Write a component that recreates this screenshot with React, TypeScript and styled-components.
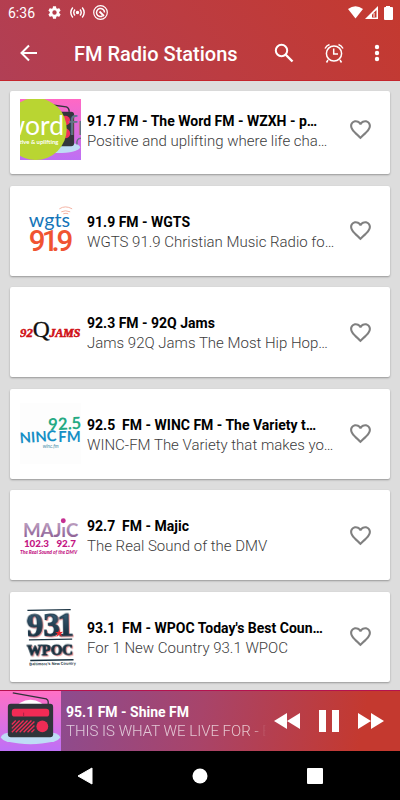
import React from "react";
import styled, { createGlobalStyle } from "styled-components";

const GlobalStyle = createGlobalStyle`
  *, *::before, *::after { box-sizing: border-box; }
  body { margin: 0; font-family: Roboto, "Liberation Sans", sans-serif; background: #ddd; }
  button { border: 0; padding: 0; background: none; color: inherit; font: inherit; cursor: pointer; }
  svg { display: block; }
`;

const Screen = styled.div`
  display: flex;
  flex-direction: column;
  height: 100vh;
  overflow: hidden;
  background: #dddddd;
`;

const Header = styled.header`
  color: #fff;
  background: linear-gradient(55deg, #b13f55 0%, #bc3c41 50%, #c4392f 100%);
  border-bottom: 1px solid #c4262e;
`;

const StatusBar = styled.div`
  display: flex;
  align-items: center;
  height: 25px;
  padding: 0 7px 0 8px;
  font-size: 14px;
`;

const StatusIcons = styled.div<{ $end?: boolean }>`
  display: flex;
  align-items: center;
  gap: ${(p) => (p.$end ? "2px" : "8px")};
  margin-left: ${(p) => (p.$end ? "auto" : "12px")};
`;

const AppBar = styled.div`
  display: flex;
  align-items: center;
  height: 55px;
  padding: 0 5px 0 16px;
`;

const Title = styled.h1`
  flex: 1;
  margin: 2px 0 0 32px;
  font-size: 20px;
  line-height: 24px;
  font-weight: 500;
  white-space: nowrap;
`;

const BarButton = styled.button<{ $width: number }>`
  display: flex;
  align-items: center;
  justify-content: center;
  width: ${(p) => p.$width}px;
  height: 40px;
`;

const List = styled.main`
  flex: 1;
  min-height: 0;
  overflow: hidden;
  display: flex;
  flex-direction: column;
  justify-content: space-between;
  padding: 10px 10px 8px;
`;

const Card = styled.article<{ $first: boolean }>`
  display: flex;
  align-items: center;
  flex: none;
  height: ${(p) => (p.$first ? 83 : 90)}px;
  padding: ${(p) => (p.$first ? "0 12px 6px 10px" : "0 12px 0 10px")};
  background: #fff;
  border-radius: 2px;
  box-shadow: 0 1px 2px rgba(0, 0, 0, 0.32);
`;

const Logo = styled.svg`
  flex: none;
  width: 61px;
  height: 61px;
`;

const Info = styled.div`
  flex: 1;
  min-width: 0;
  margin: 2px 0 0 6px;
`;

const Name = styled.h2`
  margin: 0;
  overflow: hidden;
  font-size: 14px;
  line-height: 20px;
  font-weight: 700;
  color: #000;
  white-space: pre;
`;

const Detail = styled.p`
  margin: 0;
  overflow: hidden;
  font-size: 15px;
  line-height: 20px;
  font-weight: 300;
  color: #3c3c3c;
  white-space: nowrap;
`;

const Favorite = styled.button`
  display: flex;
  align-items: center;
  justify-content: center;
  flex: none;
  width: 36px;
  height: 36px;
  color: #808080;
`;

const Player = styled.section`
  display: flex;
  align-items: center;
  flex: none;
  height: 61px;
  color: #fff;
  background: linear-gradient(100deg, #824e9e 0%, #a8446a 50%, #c4392f 90%);
  border-top: 1px solid #b5124f;
`;

const NowPlaying = styled.div`
  flex: 1;
  min-width: 0;
  margin: 2px 0 0 5px;
`;

const Track = styled.p<{ $dim?: boolean }>`
  margin: 0;
  overflow: hidden;
  font-size: ${(p) => (p.$dim ? 15 : 14)}px;
  line-height: 19px;
  font-weight: ${(p) => (p.$dim ? 300 : 700)};
  color: ${(p) => (p.$dim ? "rgba(255,255,255,.7)" : "#fff")};
  white-space: nowrap;
  mask-image: ${(p) => (p.$dim ? "linear-gradient(90deg, #000 94%, transparent)" : "none")};
`;

const Controls = styled.div`
  display: flex;
  align-items: center;
  padding: 0 8px 0 0;
`;

const ControlButton = styled.button`
  display: flex;
  align-items: center;
  justify-content: center;
  width: 42px;
  height: 48px;
`;

const NavBar = styled.nav`
  display: grid;
  grid-template-columns: repeat(3, 115px);
  justify-content: center;
  flex: none;
  height: 49px;
  color: #fff;
  background: #000;
`;

const NavButton = styled.button`
  display: flex;
  align-items: center;
  justify-content: center;
`;

const RadioArt = () => (
  <>
    <defs>
      <linearGradient id="radioSky" x2="0" y2="1">
        <stop stopColor="#ff70c5" />
        <stop offset="1" stopColor="#bd70f8" />
      </linearGradient>
    </defs>
    <path fill="url(#radioSky)" d="M0 0h62v62H0z" />
    <ellipse cx="31" cy="47" rx="30" ry="7" fill="#bfdcf5" />
    <ellipse cx="31" cy="18" rx="14" ry="9" fill="#fff" />
    <path d="M13 2l34 6q2 1 2 3v4" fill="none" stroke="#30323a" strokeWidth="1.3" />
    <rect x="8" y="13" width="46" height="34" rx="3" fill="#30343a" />
    <rect x="12" y="18" width="38" height="8" rx="3" fill="#f12b55" />
    <path d="M24 22v4" stroke="#a92045" />
    <path d="M12 34l4-4M12 38l8-8M12 42l12-12M16 42l12-12M20 42l12-12M24 42l11-11M28 42l7-7M32 42l3-3" stroke="#ef2c55" strokeWidth="1.4" />
    <circle cx="43" cy="36" r="6" fill="#ef2c55" />
  </>
);

const WordLogo = () => (
  <Logo viewBox="0 0 62 62" role="img" aria-label="The Word FM">
    <defs>
      <linearGradient id="wordSky" x2="0" y2="1">
        <stop stopColor="#ff68c4" />
        <stop offset="1" stopColor="#bd70f5" />
      </linearGradient>
    </defs>
    <path fill="url(#wordSky)" d="M0 0h62v62H0z" />
    <ellipse cx="38" cy="49" rx="23" ry="6" fill="#bfdcf5" />
    <path d="M33 6l14 2q3 1 3 5" fill="none" stroke="#34363d" strokeWidth="1.5" />
    <rect x="25" y="13" width="30" height="35" rx="3" fill="#34363d" />
    <circle cx="46" cy="22" r="5" fill="#f0305c" />
    <circle cx="46" cy="35" r="5" fill="#f0305c" />
    <text x="49" y="37" fontFamily="Lato" fontSize="27" fontWeight="400" fill="#667486">fr</text>
    <path d="M62 40q-5 0-4 6" fill="none" stroke="#667486" strokeWidth="1.5" />
    <circle cx="16" cy="30.500" r="31.500" fill="#b9d532" />
    <text x="-16" y="37" fontFamily="Lato" fontSize="27" fontWeight="400" fill="#fff">word</text>
    <text x="-2" y="46" fontFamily="Lato" fontSize="6" fontWeight="700" fill="#fff">itive &amp; uplifting</text>
  </Logo>
);

const WgtsLogo = () => (
  <Logo viewBox="0 0 62 62" role="img" aria-label="WGTS 91.9">
    <text x="9" y="27" fontFamily="Lato" fontSize="20" fill="#1675b9">wgts</text>
    <g fontFamily="Roboto" fontSize="30" fontWeight="500" fill="#f05431">
      <text x="9" y="52">9</text>
      <text x="22" y="52">1</text>
      <text x="32" y="52">.</text>
      <text x="37" y="52">9</text>
    </g>
    <path d="M40 9q6-4 13 0M42 12q4-2 9 0M44 14q3-1 5 0" fill="none" stroke="#f4b2a3" />
  </Logo>
);

const JamsLogo = () => (
  <Logo viewBox="0 0 62 62" role="img" aria-label="92Q Jams">
    <g fontFamily="Liberation Serif">
      <text x="0" y="36" fontSize="13" fontWeight="700" fontStyle="italic" fill="#d01218" stroke="#d01218" strokeWidth=".5">92</text>
      <text x="30" y="36" fontSize="12" fontWeight="700" fontStyle="italic" fill="#d01218" stroke="#d01218" strokeWidth=".6">JAMS</text>
      <text x="13" y="36" fontSize="24" fill="#111" stroke="#111" strokeWidth=".3">Q</text>
    </g>
  </Logo>
);

const WincLogo = () => (
  <Logo viewBox="0 0 62 62" role="img" aria-label="92.5 WINC FM">
    <path fill="#fdfdfd" d="M0 0h62v62H0z" />
    <text x="29" y="28" fontFamily="Lato" fontSize="17" fontWeight="700" fill="#24aa83" transform="rotate(-3 29 28)">92.5</text>
    <g fontFamily="Lato" fontWeight="700" fill="#168fc5">
      <text x="0" y="41" fontSize="15" transform="rotate(-4 0 41)">NINC</text>
      <text x="39" y="40" fontSize="15">FM</text>
    </g>
    <text x="23" y="46" fontFamily="Lato" fontSize="5" fontStyle="italic" fill="#468eaa">winc.fm</text>
  </Logo>
);

const MajicLogo = () => (
  <Logo viewBox="0 0 62 62" role="img" aria-label="Majic 102.3 92.7">
    <defs>
      <linearGradient id="majicText" x2="0" y2="1">
        <stop stopColor="#c7adc9" />
        <stop offset="1" stopColor="#81508c" />
      </linearGradient>
    </defs>
    <text x="3" y="33" fontFamily="Lato" fontSize="19" fontWeight="700" fill="url(#majicText)">MAJıC</text>
    <circle cx="44" cy="16" r="2.500" fill="#c52f91" />
    <g fontFamily="Lato" fontWeight="900" fill="#c31583">
      <text x="4" y="43" fontSize="10">102.3</text>
      <text x="37" y="43" fontSize="10">92.7</text>
      <text x="0" y="50" fontSize="5" fontStyle="italic">The Real Sound of the DMV</text>
    </g>
  </Logo>
);

const WpocText = styled.g`
  filter: drop-shadow(1px 1px 0 #f09a9c);
`;

const WpocLogo = () => (
  <Logo viewBox="0 0 62 62" role="img" aria-label="93.1 WPOC">
    <defs>
      <linearGradient id="wpocText" x2="0" y2="1">
        <stop stopColor="#416b87" />
        <stop offset="1" stopColor="#10222f" />
      </linearGradient>
    </defs>
    <g transform="rotate(-1 31 31)">
      <path d="M8 4h44M9 34h44M10 55h44" stroke="#1b3343" strokeWidth="1.400" />
      <WpocText fontFamily="Liberation Serif" fontWeight="700">
        <g fill="url(#wpocText)" stroke="#1e394b" strokeWidth="1">
          <text x="7" y="30" fontSize="34">93</text>
          <text x="38" y="30" fontSize="34">1</text>
        </g>
        <text x="7" y="50" fill="#193241" stroke="#193241" strokeWidth="1" fontSize="15">WPOC</text>
      </WpocText>
      <path d="M40 24l1 2.500h3l-2.300 1.800 1 3-2.700-1.800-2.700 1.800 1-3-2.300-1.800h3z" fill="#e8272d" />
      <text x="9" y="60" fontFamily="Liberation Sans" fontSize="4" fontWeight="700" fill="#193241">Baltimore's New Country</text>
    </g>
  </Logo>
);

const stations = [
  { name: "91.7 FM - The Word FM - WZXH - p…", detail: "Positive and uplifting where life cha…", Art: WordLogo },
  { name: "91.9 FM - WGTS", detail: "WGTS 91.9 Christian Music Radio fo…", Art: WgtsLogo },
  { name: "92.3 FM - 92Q Jams", detail: "Jams 92Q Jams The Most Hip Hop…", Art: JamsLogo },
  { name: "92.5  FM - WINC FM - The Variety t…", detail: "WINC-FM The Variety that makes yo…", Art: WincLogo },
  { name: "92.7  FM - Majic", detail: "The Real Sound of the DMV", Art: MajicLogo },
  { name: "93.1  FM - WPOC Today's Best Coun…", detail: "For 1 New Country 93.1 WPOC", Art: WpocLogo },
];

const HeartIcon = () => (
  <svg width="25" height="25" viewBox="0 0 24 24" fill="currentColor">
    <path d="M16.500 3c-1.740 0-3.410.81-4.500 2.090C10.910 3.810 9.240 3 7.500 3 4.420 3 2 5.420 2 8.500c0 3.780 3.400 6.860 8.550 11.540L12 21.350l1.450-1.320C18.600 15.360 22 12.280 22 8.500 22 5.420 19.580 3 16.500 3zm-4.400 15.550l-.1.100-.1-.1C7.140 14.240 4 11.390 4 8.500 4 6.500 5.500 5 7.500 5c1.540 0 3.040.99 3.570 2.360h1.870C13.460 5.990 14.960 5 16.500 5c2 0 3.500 1.500 3.500 3.500 0 2.890-3.140 5.740-7.900 10.050z" />
  </svg>
);

const GearIcon = () => (
  <svg width="15" height="15" viewBox="0 0 24 24" fill="currentColor">
    <path d="M19.430 12.980c.04-.32.070-.64.070-.98s-.03-.66-.07-.98l2.110-1.650c.19-.15.240-.42.120-.64l-2-3.460c-.12-.22-.39-.3-.61-.22l-2.490 1c-.52-.4-1.080-.73-1.690-.98l-.38-2.650A.49.49 0 0 0 14 2h-4c-.25 0-.46.18-.49.420l-.38 2.650c-.61.25-1.170.59-1.690.98l-2.490-1c-.23-.09-.49 0-.61.220l-2 3.460c-.13.22-.07.490.12.640l2.110 1.650c-.04.32-.07.650-.07.980s.03.660.07.980l-2.110 1.650c-.19.15-.24.420-.12.640l2 3.460c.12.220.39.300.61.220l2.490-1c.52.400 1.080.730 1.690.980l.38 2.650c.03.240.24.420.49.420h4c.25 0 .46-.18.490-.42l.38-2.650c.61-.25 1.170-.59 1.690-.98l2.490 1c.23.090.49 0 .61-.22l2-3.460c.12-.22.070-.49-.12-.64zM12 15.500a3.500 3.500 0 1 1 0-7 3.500 3.500 0 0 1 0 7z" />
  </svg>
);

export default function App() {
  return (
    <Screen>
      <GlobalStyle />
      <Header>
        <StatusBar>
          <span>6:36</span>
          <StatusIcons>
            <GearIcon />
            <svg width="15" height="15" viewBox="0 0 15 15" fill="none" stroke="currentColor" strokeWidth="1.400">
              <circle cx="7.500" cy="7.500" r="1" fill="currentColor" />
              <path d="M5 4.500q-2.500 3 0 6M10 4.500q2.500 3 0 6M2.800 2.500q-4 5 0 10M12.200 2.500q4 5 0 10" />
            </svg>
            <svg width="15" height="15" viewBox="0 0 15 15" fill="none" stroke="currentColor">
              <circle cx="7.500" cy="7.500" r="6.800" strokeWidth="1.200" />
              <path d="M9.500 11A4 4 0 1 1 11.500 7.500" strokeWidth="1.500" />
              <path d="M6.500 6.500l4.500 4.500" strokeWidth="1.800" />
            </svg>
          </StatusIcons>
          <StatusIcons $end>
            <svg width="15" height="13" viewBox="0 0 15 13" fill="currentColor">
              <path d="M0 3Q7.500-2.500 15 3L7.500 12.500z" />
            </svg>
            <svg width="14" height="13" viewBox="0 0 14 13">
              <path d="M0 13L13 0v13z" fill="currentColor" />
              <path d="M7 8.500L11.500 4v7.500H7z" fill="#c4392f" />
              <path d="M9 7v4" stroke="#fff" />
            </svg>
            <svg width="12" height="14" viewBox="2 0 12 14" fill="currentColor">
              <path d="M7 0h4v1h2q1 0 1 1v11q0 1-1 1H6q-1 0-1-1V2q0-1 1-1h1z" />
            </svg>
          </StatusIcons>
        </StatusBar>
        <AppBar>
          <BarButton $width={26} aria-label="Back">
            <svg width="18" height="18" viewBox="0 0 18 18" fill="none" stroke="currentColor" strokeWidth="2">
              <path d="M17 9H2M9 1.500L1.500 9 9 16.500" />
            </svg>
          </BarButton>
          <Title>FM Radio Stations</Title>
          <BarButton $width={50} aria-label="Search">
            <svg width="20" height="20" viewBox="0 0 20 20" fill="none" stroke="currentColor" strokeWidth="2">
              <circle cx="7.500" cy="7.500" r="5.700" />
              <path d="M11.500 11.500l7 7" strokeWidth="2.400" />
            </svg>
          </BarButton>
          <BarButton $width={50} aria-label="Alarm">
            <svg width="20" height="20" viewBox="0 0 20 20" fill="none" stroke="currentColor" strokeWidth="1.500">
              <circle cx="10" cy="10.500" r="7.600" />
              <path d="M9.700 5.500V11H14M4 17l-1.500 2.500M16 17l1.500 2.500M1 5.500Q2.500 2.500 5.500 1.500M19 5.500Q17.500 2.500 14.500 1.500" />
            </svg>
          </BarButton>
          <BarButton $width={36} aria-label="More options">
            <svg width="6" height="18" viewBox="0 0 6 18" fill="currentColor">
              <circle cx="3" cy="3" r="2.200" />
              <circle cx="3" cy="9" r="2.200" />
              <circle cx="3" cy="15" r="2.200" />
            </svg>
          </BarButton>
        </AppBar>
      </Header>
      <List>
        {stations.map(({ name, detail, Art }, i) => (
          <Card key={name} $first={i === 0}>
            <Art />
            <Info>
              <Name>{name}</Name>
              <Detail>{detail}</Detail>
            </Info>
            <Favorite aria-label={`Favorite ${name}`}>
              <HeartIcon />
            </Favorite>
          </Card>
        ))}
      </List>
      <Player>
        <Logo viewBox="0 0 62 62" role="img" aria-label="Radio">
          <RadioArt />
        </Logo>
        <NowPlaying>
          <Track>95.1 FM - Shine FM</Track>
          <Track $dim>THIS IS WHAT WE LIVE FOR - BALTIMORE</Track>
        </NowPlaying>
        <Controls>
          <ControlButton aria-label="Previous">
            <svg width="26" height="18" viewBox="0 0 26 18" fill="currentColor">
              <path d="M13 1v16L0 9zM26 1v16L13 9z" />
            </svg>
          </ControlButton>
          <ControlButton aria-label="Pause">
            <svg width="20" height="22" viewBox="0 0 20 22" fill="currentColor">
              <path d="M0 0h7v22H0zM13 0h7v22h-7z" />
            </svg>
          </ControlButton>
          <ControlButton aria-label="Next">
            <svg width="26" height="18" viewBox="0 0 26 18" fill="currentColor">
              <path d="M0 1l13 8-13 8zM13 1l13 8-13 8z" />
            </svg>
          </ControlButton>
        </Controls>
      </Player>
      <NavBar>
        <NavButton aria-label="Back">
          <svg width="16" height="18" viewBox="0 0 16 18" fill="currentColor">
            <path d="M15 1v16L1 9z" stroke="currentColor" strokeLinejoin="round" />
          </svg>
        </NavButton>
        <NavButton aria-label="Home">
          <svg width="16" height="16" viewBox="0 0 16 16" fill="currentColor">
            <circle cx="8" cy="8" r="7.500" />
          </svg>
        </NavButton>
        <NavButton aria-label="Recent apps">
          <svg width="16" height="16" viewBox="0 0 16 16" fill="currentColor">
            <rect width="16" height="16" rx="1" />
          </svg>
        </NavButton>
      </NavBar>
    </Screen>
  );
}
